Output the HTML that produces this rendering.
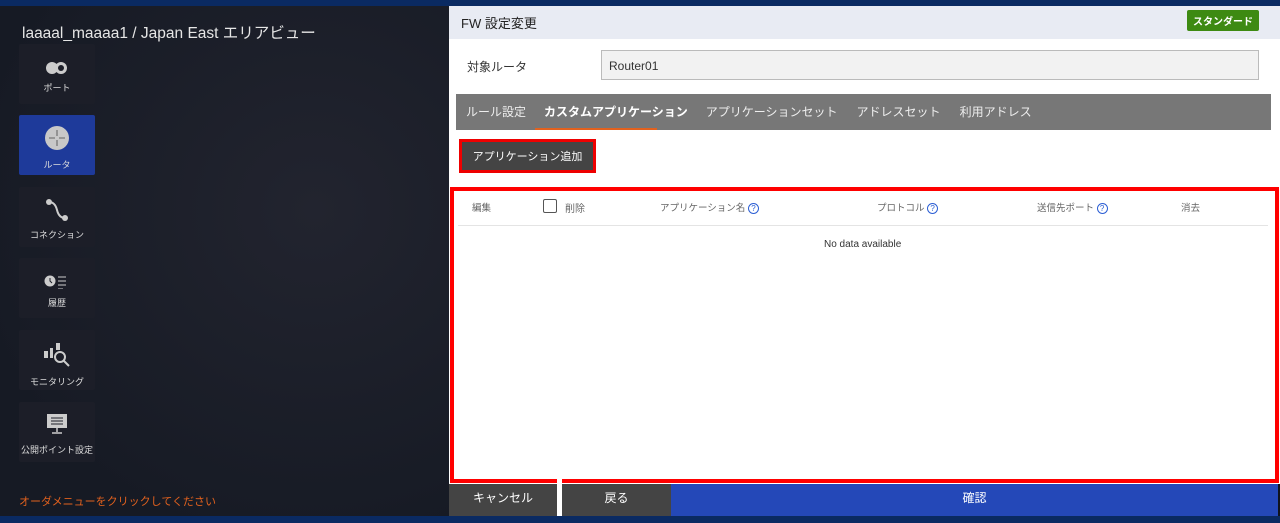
<!DOCTYPE html>
<html><head><meta charset="utf-8"><style>
*{margin:0;padding:0;box-sizing:border-box}
body{width:1280px;height:523px;overflow:hidden;position:relative;background:#1a1d27;font-family:"Liberation Sans","Noto Sans CJK JP",sans-serif}
.a{position:absolute}
.left{left:0;top:6px;width:449px;height:510px;background:radial-gradient(ellipse at 70% 40%,#22242f,#161a24 80%)}
.tile{position:absolute;left:19px;width:76px;background:#1c1e28;border-radius:2px;color:#ddd;font-size:9px;text-align:center}
.tile span{position:absolute;left:0;right:0}
.q{display:inline-block;width:11px;height:11px;border:1px solid #2c5fd4;border-radius:50%;color:#2c5fd4;font-size:8px;text-align:center;line-height:9px;vertical-align:middle}
.btn{display:flex;align-items:center;justify-content:center;color:#fff;font-size:12px;padding-bottom:6px}
</style></head><body>
<div class="a" style="left:0;top:0;width:1280px;height:6px;background:#0a2a62"></div>
<div class="a" style="left:0;top:516px;width:1280px;height:7px;background:#0a2a62"></div>
<div class="a left"></div>
<div class="a" style="left:22px;top:21px;font-size:15.5px;color:#e6e6e6;white-space:nowrap">laaaal_maaaa1&nbsp;/ Japan East エリアビュー</div>
<div class="tile" style="top:44px;height:60px"><svg class="a" style="left:26px;top:17px" width="24" height="14"><circle cx="7" cy="7" r="6" fill="#ccc"/><circle cx="16" cy="7" r="6" fill="#ccc"/><circle cx="16" cy="7" r="3" fill="#1c1e28"/></svg><span style="top:37px">ポート</span></div>
<div class="tile" style="top:115px;height:60px;background:#1e3a9a"><svg class="a" style="left:26px;top:11px" width="24" height="24"><circle cx="12" cy="12" r="12" fill="#c8c8c8"/><path d="M12 4v6M12 14v6M4 12h6M14 12h6" stroke="#777" stroke-width="1.3"/></svg><span style="top:43px">ルータ</span></div>
<div class="tile" style="top:187px;height:60px"><svg class="a" style="left:26px;top:11px" width="24" height="24"><path d="M4 4q6 0 8 8t8 8" stroke="#ccc" stroke-width="2" fill="none"/><circle cx="4" cy="4" r="3" fill="#ccc"/><circle cx="20" cy="20" r="3" fill="#ccc"/></svg><span style="top:41px">コネクション</span></div>
<div class="tile" style="top:258px;height:60px"><svg class="a" style="left:25px;top:17px" width="24" height="14"><circle cx="6" cy="6" r="5.5" fill="#ccc"/><path d="M6 3v3l2 2" stroke="#1c1e28" fill="none"/><path d="M14 2h8M14 6h8M14 10h8M14 14h5" stroke="#ccc"/></svg><span style="top:38px">履歴</span></div>
<div class="tile" style="top:330px;height:60px"><svg class="a" style="left:24px;top:11px" width="28" height="26"><rect x="1" y="10" width="4" height="7" fill="#ccc"/><rect x="7" y="7" width="3" height="10" fill="#ccc"/><rect x="13" y="2" width="4" height="7" fill="#ccc"/><circle cx="17" cy="16" r="5" stroke="#ccc" stroke-width="2" fill="none"/><path d="M21 20l5 5" stroke="#ccc" stroke-width="2"/></svg><span style="top:45px">モニタリング</span></div>
<div class="tile" style="top:402px;height:60px"><svg class="a" style="left:27px;top:11px" width="22" height="22"><rect x="1" y="1" width="20" height="14" fill="#ccc"/><path d="M5 5h12M5 8h12M5 11h12" stroke="#1c1e28"/><path d="M11 15v4M6 20h10" stroke="#ccc" stroke-width="1.5"/></svg><span style="top:41px">公開ポイント設定</span></div>
<div class="a" style="left:19px;top:493px;font-size:11px;color:#e2611e">オーダメニューをクリックしてください</div>

<div class="a" style="left:449px;top:6px;width:831px;height:478px;background:#fff"></div>
<div class="a" style="left:449px;top:6px;width:831px;height:33px;background:#e8ebf3"></div>
<div class="a" style="left:461px;top:13px;font-size:13px;color:#222">FW 設定変更</div>
<div class="a btn" style="left:1187px;top:10px;width:72px;height:21px;background:#3d8a12;border-radius:2px;font-size:10px;font-weight:bold;padding:0">スタンダード</div>
<div class="a" style="left:467px;top:58px;font-size:12px;color:#333">対象ルータ</div>
<div class="a" style="left:601px;top:50px;width:658px;height:30px;background:#f2f2f2;border:1px solid #bbb;font-size:12px;color:#333;padding:8px 7px">Router01</div>
<div class="a" style="left:456px;top:94px;width:815px;height:36px;background:#777"></div>
<div class="a" style="left:466px;top:103px;font-size:12px;color:#eee;white-space:nowrap"><span style="margin-right:18px">ルール設定</span><span style="color:#fff;font-weight:bold;margin-right:18px">カスタムアプリケーション</span><span style="margin-right:19px">アプリケーションセット</span><span style="margin-right:19px">アドレスセット</span><span>利用アドレス</span></div>
<div class="a" style="left:535px;top:128px;width:122px;height:2px;background:#e2611e"></div>
<div class="a btn" style="left:459px;top:139px;width:137px;height:34px;border:3px solid #e00;background:#444;font-size:11px;padding:0">アプリケーション追加</div>
<div class="a" style="left:450px;top:187px;width:829px;height:296px;border:4px solid #f00"></div>
<div class="a" style="left:458px;top:225px;width:810px;height:1px;background:#e4e4e4"></div>
<div class="a" style="left:472px;top:200px;font-size:9.5px;color:#666">編集</div>
<div class="a" style="left:543px;top:199px;width:14px;height:14px;border:1.5px solid #555;border-radius:2px"></div>
<div class="a" style="left:565px;top:200px;font-size:10px;color:#666">削除</div>
<div class="a" style="left:660px;top:200px;font-size:9.5px;color:#666">アプリケーション名 <span class="q">?</span></div>
<div class="a" style="left:877px;top:200px;font-size:9.5px;color:#666">プロトコル <span class="q">?</span></div>
<div class="a" style="left:1037px;top:200px;font-size:9.5px;color:#666">送信先ポート <span class="q">?</span></div>
<div class="a" style="left:1181px;top:200px;font-size:9.5px;color:#666">消去</div>
<div class="a" style="left:824px;top:239px;font-size:10px;color:#333">No data available</div>

<div class="a" style="left:449px;top:484px;width:831px;height:32px;background:#10131c"></div>
<div class="a btn" style="left:449px;top:484px;width:108px;height:32px;background:#444">キャンセル</div>
<div class="a" style="left:557px;top:478px;width:5px;height:38px;background:#fff"></div>
<div class="a btn" style="left:562px;top:484px;width:109px;height:32px;background:#444">戻る</div>
<div class="a btn" style="left:671px;top:484px;width:607px;height:32px;background:#2448b8">確認</div>
</body></html>
